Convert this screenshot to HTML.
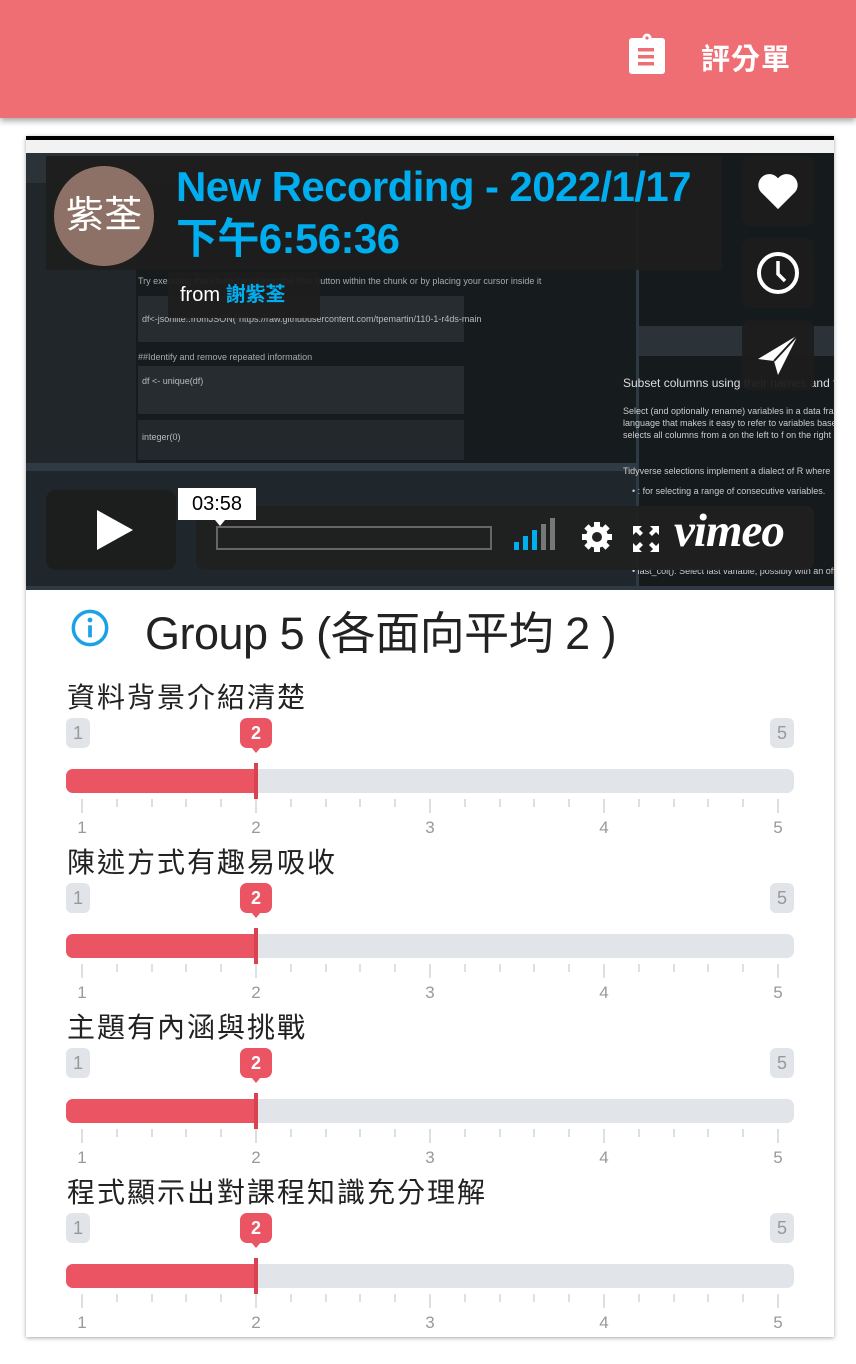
<!DOCTYPE html>
<html><head><meta charset="utf-8"><style>
*{margin:0;padding:0;box-sizing:border-box}
body{width:856px;height:1364px;background:#fff;position:relative;overflow:hidden;font-family:"Liberation Sans","Noto Sans CJK TC",sans-serif}
.abs{position:absolute}
.hdr{left:0;top:0;width:856px;height:118px;background:#ef6e73;box-shadow:0 3px 6px rgba(0,0,0,.35)}
.card{left:26px;top:136px;width:808px;height:1201px;background:#fff;box-shadow:0 1px 4px rgba(0,0,0,.35)}
.vid{left:26px;top:136px;width:808px;height:454px;background:#1b2023;overflow:hidden}
.lbl{left:67px;font-size:28px;color:#222;letter-spacing:2px;line-height:34px}
.badge{width:24px;height:30px;border-radius:6px;background:#e1e4e8;color:#999;font-size:18px;text-align:center;line-height:30px}
.rb{width:32px;height:30px;border-radius:7px;background:#eb5463;color:#fff;font-size:18px;font-weight:bold;text-align:center;line-height:30px}
.rb:after{content:"";position:absolute;left:11px;top:29px;border:5px solid transparent;border-top:6px solid #eb5463}
.trk{left:66px;width:728px;height:24px;border-radius:7px;background:#e1e4e8;overflow:hidden}
.fill{left:0;top:0;width:190px;height:24px;background:#eb5463}
.hand{width:4px;height:36px;background:#d9434f}
.tk{width:2px;background:#dcdfe3}
.num{font-size:17px;color:#999;width:20px;text-align:center;margin-left:-10px}
.txt{font-size:9px;color:#aaa;white-space:nowrap}
</style></head><body>
<div class="abs hdr"></div>
<svg class="abs" style="left:628px;top:33px" width="38" height="42" viewBox="0 0 38 42"><rect x="1" y="5" width="36" height="36" rx="3" fill="#fff"/><circle cx="19" cy="5" r="4.5" fill="#fff"/><circle cx="19" cy="5" r="1.6" fill="#ef6e73"/><rect x="10" y="15" width="16" height="3.5" fill="#ef6e73"/><rect x="10" y="22" width="16" height="3.5" fill="#ef6e73"/><rect x="10" y="29" width="16" height="3.5" fill="#ef6e73"/></svg>
<div class="abs" style="left:701px;top:36px;font-size:29px;color:#fff;font-weight:bold;letter-spacing:1px">評分單</div>

<div class="abs card"></div>
<div class="abs vid">
 <div class="abs" style="left:0;top:0;width:808px;height:4px;background:#000"></div>
 <div class="abs" style="left:0;top:4px;width:808px;height:13px;background:#f2f2f2"></div>
 <div class="abs" style="left:0;top:17px;width:808px;height:30px;background:#2b3338"></div>
 <div class="abs" style="left:0;top:47px;width:110px;height:280px;background:#202629"></div>
 <div class="abs" style="left:110px;top:47px;width:500px;height:280px;background:#161b1e"></div>
 <div class="abs" style="left:112px;top:160px;width:326px;height:46px;background:#262c30"></div>
 <div class="abs" style="left:112px;top:230px;width:326px;height:48px;background:#262c30"></div>
 <div class="abs" style="left:112px;top:284px;width:326px;height:40px;background:#22282b"></div>
 <div class="abs txt" style="left:112px;top:140px">Try executing this chunk by clicking the Run button within the chunk or by placing your cursor inside it</div>
 <div class="abs txt" style="left:116px;top:178px;color:#bbb">df&lt;-jsonlite::fromJSON("https://raw.githubusercontent.com/tpemartin/110-1-r4ds-main</div>
 <div class="abs txt" style="left:112px;top:216px">##Identify and remove repeated information</div>
 <div class="abs txt" style="left:116px;top:240px;color:#bbb">df &lt;- unique(df)</div>
 <div class="abs txt" style="left:116px;top:296px;color:#bbb">integer(0)</div>
 <div class="abs" style="left:0;top:327px;width:610px;height:8px;background:#2e3a44"></div>
 <div class="abs" style="left:0;top:335px;width:610px;height:119px;background:#1f272d"></div>
 <div class="abs" style="left:610px;top:17px;width:198px;height:437px;background:#151a1d;border-left:3px solid #2d3a44"></div>
 <div class="abs" style="left:613px;top:190px;width:195px;height:30px;background:#2b3338"></div>
 <div class="abs" style="left:597px;top:240px;font-size:12px;color:#ddd;white-space:nowrap">Subset columns using their names and types</div>
 <div class="abs txt" style="left:597px;top:270px;color:#ccc">Select (and optionally rename) variables in a data frame,</div>
 <div class="abs txt" style="left:597px;top:282px;color:#ccc">language that makes it easy to refer to variables based</div>
 <div class="abs txt" style="left:597px;top:294px;color:#ccc">selects all columns from a on the left to f on the right</div>
 <div class="abs txt" style="left:597px;top:330px;color:#ccc">Tidyverse selections implement a dialect of R where</div>
 <div class="abs txt" style="left:606px;top:350px;color:#ccc">• : for selecting a range of consecutive variables.</div>
 <div class="abs txt" style="left:606px;top:430px;color:#ccc">• last_col(): Select last variable, possibly with an offset.</div>
 <div class="abs" style="left:0;top:450px;width:808px;height:4px;background:#2d3a44"></div>

 <div class="abs" style="left:20px;top:20px;width:676px;height:114px;background:rgba(30,30,30,.95)"></div>
 <div class="abs" style="left:28px;top:30px;width:100px;height:100px;border-radius:50%;background:#8d7166;color:#fff;font-size:38px;text-align:center;line-height:100px">紫荃</div>
 <div class="abs" style="left:150px;top:25px;font-size:42px;font-weight:bold;color:#00adef;white-space:nowrap;line-height:52px;letter-spacing:-0.6px">New Recording - 2022/1/17<br>下午6:56:36</div>
 <div class="abs" style="left:142px;top:136px;width:152px;height:46px;background:rgba(30,30,30,.95);color:#fff;font-size:20px;line-height:46px;padding-left:12px;white-space:nowrap">from <b style="color:#00adef">謝紫荃</b></div>

 <div class="abs" style="left:716px;top:20px;width:72px;height:70px;border-radius:8px;background:rgba(28,28,28,.95)"></div>
 <div class="abs" style="left:716px;top:102px;width:72px;height:70px;border-radius:8px;background:rgba(28,28,28,.95)"></div>
 <div class="abs" style="left:716px;top:184px;width:72px;height:70px;border-radius:8px;background:rgba(28,28,28,.95)"></div>
 <svg class="abs" style="left:729px;top:35px" width="46" height="40" viewBox="0 0 24 22"><path d="M12 21 L2.5 11.5 A5.5 5.5 0 0 1 12 4 A5.5 5.5 0 0 1 21.5 11.5 Z" fill="#fff"/></svg>
 <svg class="abs" style="left:730px;top:115px" width="44" height="44" viewBox="0 0 44 44"><circle cx="22" cy="22" r="19" fill="none" stroke="#fff" stroke-width="4"/><path d="M22 10 V23 L29 30" fill="none" stroke="#fff" stroke-width="3.5"/></svg>
 <svg class="abs" style="left:730px;top:197px" width="44" height="44" viewBox="0 0 44 44"><path d="M42 2 L2 26 L18 28 L22 42 Z" fill="#fff"/><path d="M42 2 L18 28" stroke="#1c1c1c" stroke-width="2"/></svg>

 <div class="abs" style="left:20px;top:354px;width:130px;height:80px;border-radius:10px;background:rgba(28,28,28,.95)"></div>
 <svg class="abs" style="left:69px;top:374px" width="40" height="40" viewBox="0 0 40 40"><path d="M2 0 L38 20 L2 40 Z" fill="#fff"/></svg>
 <div class="abs" style="left:170px;top:370px;width:618px;height:64px;border-radius:8px;background:rgba(32,32,32,.95)"></div>
 <div class="abs" style="left:190px;top:390px;width:276px;height:24px;border:2px solid #666"></div>
 <div class="abs" style="left:152px;top:352px;width:78px;height:32px;background:#fff;color:#000;font-size:20px;text-align:center;line-height:32px">03:58</div>
 <div class="abs" style="left:189px;top:384px;border:5px solid transparent;border-top:6px solid #fff"></div>
 <div class="abs" style="left:488px;top:406px;width:5px;height:8px;background:#00adef"></div>
 <div class="abs" style="left:497px;top:400px;width:5px;height:14px;background:#00adef"></div>
 <div class="abs" style="left:506px;top:394px;width:5px;height:20px;background:#00adef"></div>
 <div class="abs" style="left:515px;top:388px;width:5px;height:26px;background:#777"></div>
 <div class="abs" style="left:524px;top:382px;width:5px;height:32px;background:#777"></div>
 <svg class="abs" style="left:555px;top:385px" width="32" height="32" viewBox="0 0 32 32"><g fill="#fff"><circle cx="16" cy="16" r="11"/><rect x="13" y="1" width="6" height="30"/><rect x="1" y="13" width="30" height="6"/><rect x="13" y="1" width="6" height="30" transform="rotate(45 16 16)"/><rect x="13" y="1" width="6" height="30" transform="rotate(-45 16 16)"/></g><circle cx="16" cy="16" r="5" fill="#222"/></svg>
 <svg class="abs" style="left:607px;top:390px" width="26" height="26" viewBox="0 0 26 26"><g fill="#fff"><path d="M0 0 H9 L6 3 L10 7 L7 10 L3 6 L0 9Z"/><path d="M26 0 V9 L23 6 L19 10 L16 7 L20 3 L17 0Z"/><path d="M0 26 V17 L3 20 L7 16 L10 19 L6 23 L9 26Z"/><path d="M26 26 H17 L20 23 L16 19 L19 16 L23 20 L26 17Z"/></g></svg>
 <div class="abs" style="left:648px;top:368px;font-size:47px;font-weight:bold;font-style:italic;color:#fff;font-family:'Liberation Serif',serif;letter-spacing:-1px">vimeo</div>
</div>

<svg class="abs" style="left:70px;top:608px" width="40" height="40" viewBox="0 0 30 30"><circle cx="15" cy="15" r="12.5" fill="none" stroke="#1da1e6" stroke-width="2.6"/><rect x="13.6" y="13" width="2.8" height="9" fill="#1da1e6"/><circle cx="15" cy="9" r="1.8" fill="#1da1e6"/></svg>
<div class="abs" style="left:145px;top:597px;font-size:45px;color:#222;white-space:nowrap;letter-spacing:-0.5px">Group 5 (各面向平均 2 )</div>

<div id="s"></div>
<script>
var labels=["資料背景介紹清楚","陳述方式有趣易吸收","主題有內涵與挑戰","程式顯示出對課程知識充分理解"];
var Ls=[697,862,1027,1192],h="";
for(var k=0;k<4;k++){var L=Ls[k];
h+='<div class="abs lbl" style="top:'+(L-16)+'px">'+labels[k]+'</div>';
h+='<div class="abs badge" style="left:66px;top:'+(L+21)+'px">1</div>';
h+='<div class="abs badge" style="left:770px;top:'+(L+21)+'px">5</div>';
h+='<div class="abs rb" style="left:240px;top:'+(L+21)+'px">2</div>';
h+='<div class="abs trk" style="top:'+(L+72)+'px"><div class="abs fill"></div></div>';
h+='<div class="abs hand" style="left:254px;top:'+(L+66)+'px"></div>';
for(var i=0;i<=20;i++){var x=82+i*34.8;var maj=i%5==0;
h+='<div class="abs tk" style="left:'+(x-1)+'px;top:'+(L+102)+'px;height:'+(maj?14:8)+'px"></div>';
if(maj)h+='<div class="abs num" style="left:'+x+'px;top:'+(L+121)+'px">'+(i/5+1)+'</div>';}
}
document.getElementById("s").innerHTML=h;
</script>
</body></html>
